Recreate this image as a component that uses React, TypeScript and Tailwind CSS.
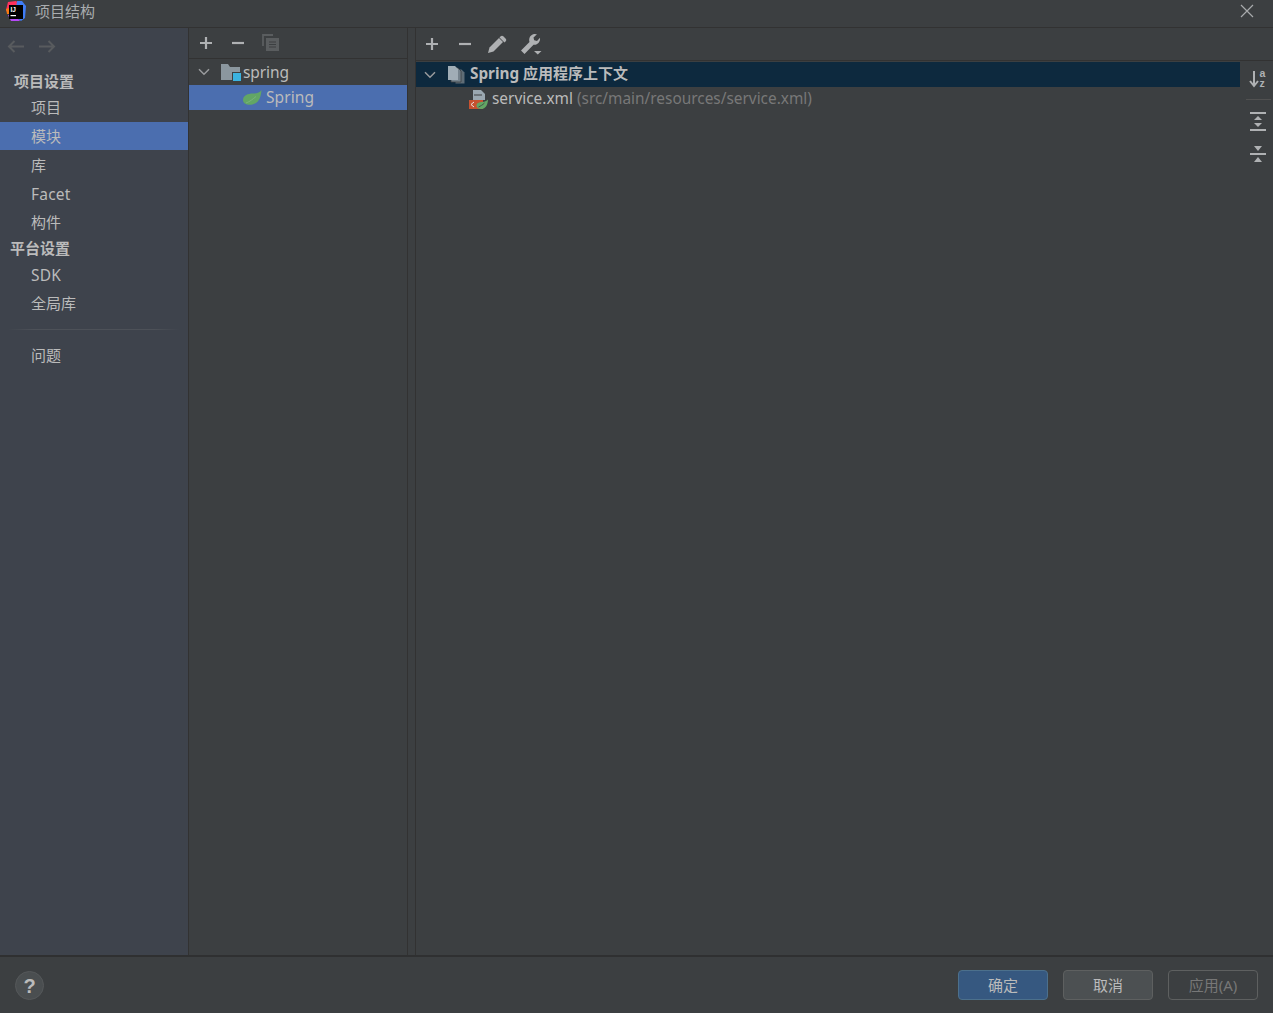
import React from "react";

const font = "font-['Noto_Sans','Noto_Sans_CJK_SC',sans-serif]";

function Plus({ className = "" }: { className?: string }) {
  return (
    <svg width="16" height="16" viewBox="0 0 16 16" className={className}>
      <path d="M8 2v12M2 8h12" stroke="#afb1b3" strokeWidth="2.2" />
    </svg>
  );
}
function Minus({ className = "" }: { className?: string }) {
  return (
    <svg width="16" height="16" viewBox="0 0 16 16" className={className}>
      <path d="M2 8h12" stroke="#afb1b3" strokeWidth="2.2" />
    </svg>
  );
}
function Chevron() {
  return (
    <svg width="12" height="8" viewBox="0 0 12 8">
      <path d="M1 1.2l5 5 5-5" fill="none" stroke="#9a9c9e" strokeWidth="1.5" />
    </svg>
  );
}
function Leaf() {
  return (
    <svg width="19" height="15" viewBox="0 0 19 15">
      <path d="M18.500 0C18 6 16.500 14 8 14.700C3 15 0 13 0 10C0 5.500 5 3.500 10 3.500C14 3.500 17 2.500 18.500 0Z" fill="#62a665" />
      <path d="M3 13C7 11.500 10 9 13 6.500" stroke="#7fb881" strokeWidth="0.8" fill="none" />
    </svg>
  );
}
function NavItem({ label, active, latin }: { label: string; active?: boolean; latin?: boolean }) {
  return (
    <div className={`h-[28.5px] pl-[31px] flex items-center text-[#bbbbbb] ${latin ? "text-[15.5px] tracking-[0.2px] pt-[2px]" : "text-[15px]"} ${active ? "bg-[#4b6eaf]" : ""}`}>
      {label}
    </div>
  );
}

export default function App() {
  return (
    <div className={`${font} w-[1273px] h-[1013px] flex flex-col overflow-hidden bg-[#3c3f41] text-[#bbbbbb]`}>
      {/* title bar */}
      <div className="h-[28px] shrink-0 flex items-center border-b border-[#323232]">
        <svg width="20" height="20" viewBox="0 0 20 20" className="ml-[6px] mb-[6px]">
          <path d="M0 9L2 1l8-1 3 2-3 10H2z" fill="#fe315d" />
          <path d="M11 0h5l4 5-1 12-4 3-6-4z" fill="#3f7cf5" />
          <path d="M0 8l3-1v6l-2 0z" fill="#f97a12" />
          <path d="M2 14l7 0 5 6H5z" fill="#b74af7" />
          <rect x="3" y="4" width="14" height="14" fill="#000" />
          <text x="4.500" y="10.500" fontSize="6.500" fontWeight="700" fill="#fff" fontFamily="Liberation Sans">IJ</text>
          <rect x="4.500" y="14" width="5.500" height="1.200" fill="#fff" />
        </svg>
        <span className="ml-[9px] mb-[5px] text-[15px] text-[#aaadaf]">项目结构</span>
        <svg width="14" height="14" viewBox="0 0 14 14" className="ml-auto mr-[19px] mb-[5px]">
          <path d="M1 1l12 12M13 1L1 13" stroke="#a8aaac" strokeWidth="1.2" />
        </svg>
      </div>

      {/* body */}
      <div className="flex-1 min-h-0 flex">
        {/* sidebar */}
        <div className="w-[189px] shrink-0 bg-[#3e434c] border-r border-[#323232] flex flex-col">
          <div className="h-[36px] pl-[7px] flex items-center gap-[15px]">
            <svg width="17" height="13" viewBox="0 0 17 13">
              <path d="M17 6.500H2M7.500 1L2 6.500 7.500 12" fill="none" stroke="#585b5e" strokeWidth="2" />
            </svg>
            <svg width="17" height="13" viewBox="0 0 17 13">
              <path d="M0 6.500h15M9.500 1L15 6.500 9.500 12" fill="none" stroke="#585b5e" strokeWidth="2" />
            </svg>
          </div>
          <div className="mt-[5px] h-[24px] pl-[14px] flex items-center text-[15px] font-bold text-[#bbbbbb]">项目设置</div>
          <NavItem label="项目" />
          <NavItem label="模块" active />
          <div className="mt-[0.5px]">
            <NavItem label="库" />
          </div>
          <NavItem label="Facet" latin />
          <NavItem label="构件" />
          <div className="h-[24px] pl-[10px] flex items-center text-[15px] font-bold text-[#bbbbbb]">平台设置</div>
          <NavItem label="SDK" latin />
          <NavItem label="全局库" />
          <div className="mt-[11.5px] mx-[8px] h-px bg-[linear-gradient(90deg,transparent,#4d5158_15%,#4d5158_85%,transparent)]" />
          <div className="mt-[11px]">
            <NavItem label="问题" />
          </div>
        </div>

        {/* module tree */}
        <div className="w-[219px] shrink-0 border-r border-[#323232] flex flex-col">
          <div className="h-[31px] shrink-0 border-b border-[#323232] pl-[9px] flex items-center">
            <Plus />
            <Minus className="ml-[16px]" />
            <svg width="18" height="18" viewBox="0 0 18 18" className="ml-[16px]">
              <path d="M1 12V1h10" fill="none" stroke="#5a5d5f" strokeWidth="1.800" />
              <rect x="4" y="4" width="13" height="13" fill="#5a5d5f" />
              <path d="M7 8h7M7 10.500h7M7 13h7" stroke="#3c3f41" strokeWidth="1" />
            </svg>
          </div>
          <div className="h-[26px] flex items-center pl-[9px] text-[15.5px]">
            <Chevron />
            <svg width="20" height="17" viewBox="0 0 20 17" className="ml-[11px] mt-[1px]">
              <path d="M0 0h7l2 3h10v13H0z" fill="#8b979f" />
              <rect x="11" y="8" width="9" height="9" fill="#3c3f41" />
              <rect x="12" y="9" width="8" height="8" fill="#3bb3e0" />
            </svg>
            <span className="ml-[2px] pt-[2px] text-[#bbbbbb] tracking-[-0.1px]">spring</span>
          </div>
          <div className="h-[25px] flex items-center pl-[54px] bg-[#4b6eaf] text-[15.5px]">
            <Leaf />
            <span className="ml-[4px] text-[#bbbbbb] tracking-[0.1px]">Spring</span>
          </div>
        </div>

        {/* gap */}
        <div className="w-[7px] shrink-0" />

        {/* right panel */}
        <div className="flex-1 min-w-0 border-l border-[#323232] flex flex-col">
          <div className="h-[33px] shrink-0 border-b border-[#323232] pl-[8px] flex items-center">
            <Plus />
            <Minus className="ml-[17px]" />
            <svg width="19" height="18" viewBox="0 0 19 18" className="ml-[15px] mb-[1px]">
              <path d="M0 18l1.500-5.500L11 3l4 4-9.500 9.500z" fill="#afb1b3" />
              <path d="M12.500 1.500c1-1 2-1 3 0l2 2c1 1 1 2 0 3l-1 1-5-5z" fill="#afb1b3" />
            </svg>
            <svg width="22" height="22" viewBox="0 0 22 22" className="ml-[13px]">
              <path d="M1 17.500L9.500 9C8.500 5.500 10 2 14 1c1.200-.3 2.200 0 3 .3L13.500 4.500l.7 2.800 2.800.7 3-3.300c.6 4-2.500 7.500-6.500 7L4.500 21z" fill="#afb1b3" />
              <path d="M14 18h7.500l-3.750 3.500z" fill="#afb1b3" />
            </svg>
          </div>
          <div className="flex-1 min-h-0 flex">
            <div className="flex-1 min-w-0">
              <div className="h-[25px] mt-[1px] bg-[#0d293e] flex items-center pl-[8px] text-[15.3px]">
                <Chevron />
                <svg width="17" height="18" viewBox="0 0 17 18" className="ml-[12px]">
                  <path d="M5 4h6l3 3v11H5z" fill="#5f6d76" transform="translate(2.500 -.5)" />
                  <path d="M3 2h7l3 3v11H3z" fill="#75838d" />
                  <path d="M3 2h7l3 3v11H3z" fill="none" stroke="#3c3f41" strokeWidth=".8" />
                  <path d="M0 0h7l3 3v11H0z" fill="#a0adb6" />
                </svg>
                <span className="ml-[5px] pb-[2px] font-bold text-[#bbbbbb]">Spring <span className="text-[15px]">应用程序上下文</span></span>
              </div>
              <div className="h-[25px] flex items-center pl-[53px] text-[15.4px]">
                <svg width="19" height="19" viewBox="0 0 19 19">
                  <path d="M4 0h8l4 4v6H4z" fill="#9aa7b0" />
                  <path d="M5 5h8" stroke="#3c3f41" strokeWidth="1" />
                  <rect x="0" y="10" width="14" height="9" fill="#c75230" />
                  <path d="M5 12l-3 2.500L5 17" fill="none" stroke="#e8e8e8" strokeWidth="1" />
                  <path d="M19 9.500c0 5-2.500 9.500-6.500 9.500-3 0-5-1-5-3.500 0-3 4-3.500 6-3.500s4-1 5.500-2.500z" fill="#62a665" />
                  <path d="M9.500 17c2-1 4-2 6-4" stroke="#3c3f41" strokeWidth=".8" fill="none" />
                </svg>
                <span className="ml-[4px] pb-[1px] text-[#bbbbbb]">service.xml</span>
                <span className="ml-[4px] pb-[1px] text-[#787878]">(src/main/resources/service.xml)</span>
              </div>
            </div>
            <div className="w-[33px] shrink-0 flex flex-col items-center pt-[7px] pl-[3px]">
              <svg width="20" height="22" viewBox="0 0 20 22">
                <path d="M6 3v15M2 13l4 5 4-5" fill="none" stroke="#afb1b3" strokeWidth="2" />
                <text x="11.500" y="9" fontSize="10.500" fontWeight="700" fill="#afb1b3" fontFamily="Liberation Sans">a</text>
                <text x="11.500" y="19" fontSize="10.500" fontWeight="700" fill="#afb1b3" fontFamily="Liberation Sans">z</text>
              </svg>
              <div className="mt-[9px] w-[25px] h-px bg-[#515151]" />
              <svg width="16" height="19" viewBox="0 0 16 19" className="mt-[12px]">
                <path d="M0 1h16M0 18h16" stroke="#afb1b3" strokeWidth="2" />
                <path d="M8 4l4 4H4zM8 15l-4-4h8z" fill="#afb1b3" />
              </svg>
              <svg width="16" height="18" viewBox="0 0 16 18" className="mt-[14px]">
                <path d="M0 9h16" stroke="#afb1b3" strokeWidth="2" />
                <path d="M4 1h8l-4 5zM4 17h8l-4-5z" fill="#afb1b3" />
              </svg>
            </div>
          </div>
        </div>
      </div>

      {/* footer */}
      <div className="h-[58px] shrink-0 border-t-2 border-[#2f3031] flex items-center pl-[15px] pr-[15px]">
        <div className="w-[29px] h-[29px] rounded-full bg-[#4a4e50] border border-[#55585a] flex items-center justify-center text-[20px] leading-none pt-[2px] font-bold text-[#bbbbbb] font-['Liberation_Sans',sans-serif]">?</div>
        <button className="ml-auto w-[90px] h-[30px] pt-[1px] rounded-[4px] bg-[#365880] border border-[#4c708c] text-[15px] text-[#bbbbbb]">确定</button>
        <button className="ml-[15px] w-[90px] h-[30px] pt-[1px] rounded-[4px] bg-[#4c5052] border border-[#5e6060] text-[15px] text-[#bbbbbb]">取消</button>
        <button className="ml-[15px] w-[90px] h-[30px] pt-[1px] rounded-[4px] border border-[#5e6060] text-[15px] text-[#777777]">应用(A)</button>
      </div>
    </div>
  );
}
